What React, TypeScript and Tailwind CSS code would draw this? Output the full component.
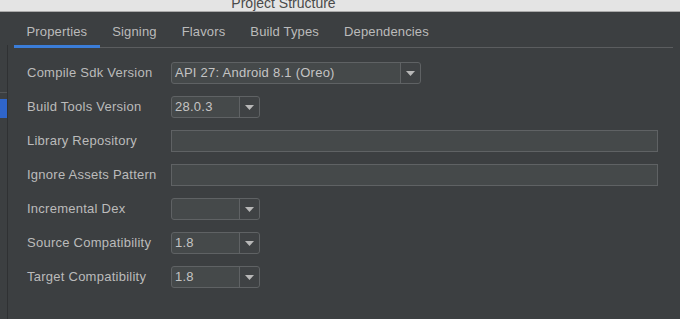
import React from 'react';

type Row = { label: string; kind: 'combo' | 'text'; value?: string; width?: string };

const ROWS: Row[] = [
  { label: 'Compile Sdk Version', kind: 'combo', value: 'API 27: Android 8.1 (Oreo)', width: 'w-[250px]' },
  { label: 'Build Tools Version', kind: 'combo', value: '28.0.3', width: 'w-[89px]' },
  { label: 'Library Repository', kind: 'text' },
  { label: 'Ignore Assets Pattern', kind: 'text' },
  { label: 'Incremental Dex', kind: 'combo', value: '', width: 'w-[89px]' },
  { label: 'Source Compatibility', kind: 'combo', value: '1.8', width: 'w-[89px]' },
  { label: 'Target Compatibility', kind: 'combo', value: '1.8', width: 'w-[89px]' },
];

const TABS = ['Properties', 'Signing', 'Flavors', 'Build Types', 'Dependencies'];

function Combo({ value, width }: { value?: string; width?: string }) {
  return (
    <div className={`${width} h-[22px] flex border border-[#5f6264] rounded-[3px] bg-[#45494a]`}>
      <div className="flex-1 flex items-center pl-[3px] text-[13px] tracking-[0.25px] text-[#c4c4c4]">{value}</div>
      <div className="w-[20px] flex items-center justify-center border-l border-[#5f6264] bg-[#3f4244] rounded-r-[3px]">
        <svg width="9" height="5" viewBox="0 0 9 5"><path d="M0 0h9L4.5 5z" fill="#b8b8b8" /></svg>
      </div>
    </div>
  );
}

export default function App() {
  return (
    <div className="w-[680px] h-[319px] bg-[#3c3f41] overflow-hidden flex flex-col" style={{ fontFamily: '"Liberation Sans", Arial, sans-serif' }}>
      {/* title bar */}
      <div className="h-[12px] shrink-0 bg-[#e4e4e4] border-b border-[#a9a9a9] overflow-hidden flex justify-center">
        <div className="-mt-[6px] ml-[-113px] text-[14px] text-[#4a4a4a] leading-[18px]">Project Structure</div>
      </div>

      <div className="flex-1 flex">
        {/* left strip */}
        <div className="w-[8px] shrink-0 flex flex-col border-r border-[#2f3133] mt-[33px]">
          <div className="h-[47px]" />
          <div className="h-px bg-[#535557]" />
          <div className="h-[6px]" />
          <div className="h-[19px] bg-[#2f65ca]" />
          <div className="flex-1" />
        </div>

        <div className="flex-1 flex flex-col">
          {/* tabs */}
          <div className="ml-[6px] mr-[7px] mt-[11px] flex border-b border-[#5b5d5f] h-[25px]">
            {TABS.map((t, i) => (
              <div
                key={t}
                className={`px-[12.5px] text-[13px] tracking-[0.15px] text-[#bbbbbb] leading-[18px] -mb-px ${i === 0 ? 'border-b-[3px] border-[#3b7dd8]' : ''}`}
              >
                {t}
              </div>
            ))}
          </div>

          {/* form */}
          <div className="flex flex-col gap-[12px] mt-[14px] ml-[19px]">
            {ROWS.map((r) => (
              <div key={r.label} className="flex items-center h-[22px]">
                <div className="w-[144px] text-[13px] tracking-[0.25px] text-[#bbbbbb]">{r.label}</div>
                {r.kind === 'combo' ? (
                  <Combo value={r.value} width={r.width} />
                ) : (
                  <div className="w-[487px] h-[22px] border border-[#5f6264] bg-[#45494a]" />
                )}
              </div>
            ))}
          </div>
        </div>
      </div>
    </div>
  );
}
